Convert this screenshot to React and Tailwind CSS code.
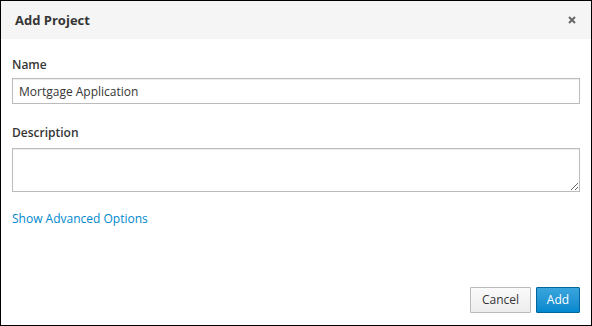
import React from "react";

export default function App() {
  return (
    <div
      className="w-[592px] h-[326px] border border-black bg-white flex flex-col text-[#363636] overflow-hidden"
      style={{ fontFamily: '"Open Sans", "Liberation Sans", sans-serif' }}
    >
      <div className="h-[38px] shrink-0 bg-[#f5f5f5] flex items-center justify-between pl-[14px] pr-[14px]">
        <h1 className="text-[13px] font-bold text-[#363636] leading-none">Add Project</h1>
        <button className="w-[10px] h-[10px] flex items-center justify-center text-[#6a6a6a]">
          <svg width="8" height="8" viewBox="0 0 8 8">
            <path d="M1 1 L7 7 M7 1 L1 7" stroke="#666" strokeWidth="2" strokeLinecap="butt" />
          </svg>
        </button>
      </div>
      <div className="flex-1 flex flex-col px-[11px] pt-[17px]">
        <label className="text-[12px] font-semibold leading-[18px] mb-[4px]">Name</label>
        <input
          defaultValue="Mortgage Application"
          className="h-[26px] w-[568px] border border-[#bbbbbb] px-[6px] text-[12px] text-[#363636] outline-none shadow-[inset_0_1px_1px_rgba(3,3,3,0.075)]"
          style={{ fontFamily: '"Open Sans", "Liberation Sans", sans-serif' }}
        />
        <label className="text-[12px] font-semibold leading-[18px] mt-[20px] mb-[6px]">Description</label>
        <textarea
          className="h-[44px] w-[568px] border border-[#bbbbbb] px-[6px] text-[12px] outline-none shadow-[inset_0_1px_1px_rgba(3,3,3,0.075)]"
        />
        <a className="text-[12px] text-[#0088ce] mt-[18px] leading-[18px] cursor-pointer">Show Advanced Options</a>
      </div>
      <div className="flex justify-end gap-[5px] pr-[11px] pb-[12px]">
        <button className="h-[26px] w-[61px] border border-[#bbbbbb] rounded-[1px] bg-gradient-to-b from-[#fafafa] to-[#ededed] text-[12px] text-[#363636]">
          Cancel
        </button>
        <button className="h-[26px] w-[44px] border border-[#00659c] rounded-[1px] bg-gradient-to-b from-[#39a5dc] to-[#0088ce] text-[12px] text-white">
          Add
        </button>
      </div>
    </div>
  );
}
